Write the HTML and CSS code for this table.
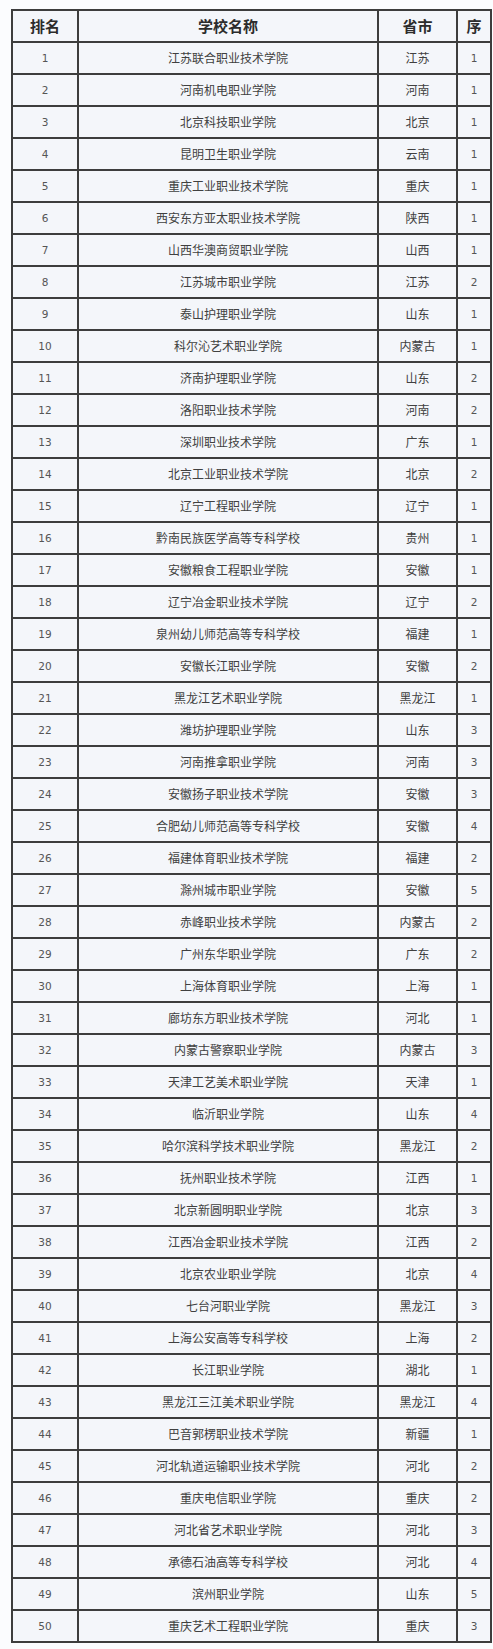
FILE: index.html
```html
<!DOCTYPE html>
<html lang="zh">
<head>
<meta charset="utf-8">
<link rel="stylesheet" href="styles.css">
</head>
<body>
<div class="rank">
  <div class="row head"><div class="cell c1">排名</div><div class="cell c2">学校名称</div><div class="cell c3">省市</div><div class="cell c4">序</div></div>
  <div class="row"><div class="cell c1 num">1</div><div class="cell c2">江苏联合职业技术学院</div><div class="cell c3">江苏</div><div class="cell c4 num">1</div></div>
  <div class="row"><div class="cell c1 num">2</div><div class="cell c2">河南机电职业学院</div><div class="cell c3">河南</div><div class="cell c4 num">1</div></div>
  <div class="row"><div class="cell c1 num">3</div><div class="cell c2">北京科技职业学院</div><div class="cell c3">北京</div><div class="cell c4 num">1</div></div>
  <div class="row"><div class="cell c1 num">4</div><div class="cell c2">昆明卫生职业学院</div><div class="cell c3">云南</div><div class="cell c4 num">1</div></div>
  <div class="row"><div class="cell c1 num">5</div><div class="cell c2">重庆工业职业技术学院</div><div class="cell c3">重庆</div><div class="cell c4 num">1</div></div>
  <div class="row"><div class="cell c1 num">6</div><div class="cell c2">西安东方亚太职业技术学院</div><div class="cell c3">陕西</div><div class="cell c4 num">1</div></div>
  <div class="row"><div class="cell c1 num">7</div><div class="cell c2">山西华澳商贸职业学院</div><div class="cell c3">山西</div><div class="cell c4 num">1</div></div>
  <div class="row"><div class="cell c1 num">8</div><div class="cell c2">江苏城市职业学院</div><div class="cell c3">江苏</div><div class="cell c4 num">2</div></div>
  <div class="row"><div class="cell c1 num">9</div><div class="cell c2">泰山护理职业学院</div><div class="cell c3">山东</div><div class="cell c4 num">1</div></div>
  <div class="row"><div class="cell c1 num">10</div><div class="cell c2">科尔沁艺术职业学院</div><div class="cell c3">内蒙古</div><div class="cell c4 num">1</div></div>
  <div class="row"><div class="cell c1 num">11</div><div class="cell c2">济南护理职业学院</div><div class="cell c3">山东</div><div class="cell c4 num">2</div></div>
  <div class="row"><div class="cell c1 num">12</div><div class="cell c2">洛阳职业技术学院</div><div class="cell c3">河南</div><div class="cell c4 num">2</div></div>
  <div class="row"><div class="cell c1 num">13</div><div class="cell c2">深圳职业技术学院</div><div class="cell c3">广东</div><div class="cell c4 num">1</div></div>
  <div class="row"><div class="cell c1 num">14</div><div class="cell c2">北京工业职业技术学院</div><div class="cell c3">北京</div><div class="cell c4 num">2</div></div>
  <div class="row"><div class="cell c1 num">15</div><div class="cell c2">辽宁工程职业学院</div><div class="cell c3">辽宁</div><div class="cell c4 num">1</div></div>
  <div class="row"><div class="cell c1 num">16</div><div class="cell c2">黔南民族医学高等专科学校</div><div class="cell c3">贵州</div><div class="cell c4 num">1</div></div>
  <div class="row"><div class="cell c1 num">17</div><div class="cell c2">安徽粮食工程职业学院</div><div class="cell c3">安徽</div><div class="cell c4 num">1</div></div>
  <div class="row"><div class="cell c1 num">18</div><div class="cell c2">辽宁冶金职业技术学院</div><div class="cell c3">辽宁</div><div class="cell c4 num">2</div></div>
  <div class="row"><div class="cell c1 num">19</div><div class="cell c2">泉州幼儿师范高等专科学校</div><div class="cell c3">福建</div><div class="cell c4 num">1</div></div>
  <div class="row"><div class="cell c1 num">20</div><div class="cell c2">安徽长江职业学院</div><div class="cell c3">安徽</div><div class="cell c4 num">2</div></div>
  <div class="row"><div class="cell c1 num">21</div><div class="cell c2">黑龙江艺术职业学院</div><div class="cell c3">黑龙江</div><div class="cell c4 num">1</div></div>
  <div class="row"><div class="cell c1 num">22</div><div class="cell c2">潍坊护理职业学院</div><div class="cell c3">山东</div><div class="cell c4 num">3</div></div>
  <div class="row"><div class="cell c1 num">23</div><div class="cell c2">河南推拿职业学院</div><div class="cell c3">河南</div><div class="cell c4 num">3</div></div>
  <div class="row"><div class="cell c1 num">24</div><div class="cell c2">安徽扬子职业技术学院</div><div class="cell c3">安徽</div><div class="cell c4 num">3</div></div>
  <div class="row"><div class="cell c1 num">25</div><div class="cell c2">合肥幼儿师范高等专科学校</div><div class="cell c3">安徽</div><div class="cell c4 num">4</div></div>
  <div class="row"><div class="cell c1 num">26</div><div class="cell c2">福建体育职业技术学院</div><div class="cell c3">福建</div><div class="cell c4 num">2</div></div>
  <div class="row"><div class="cell c1 num">27</div><div class="cell c2">滁州城市职业学院</div><div class="cell c3">安徽</div><div class="cell c4 num">5</div></div>
  <div class="row"><div class="cell c1 num">28</div><div class="cell c2">赤峰职业技术学院</div><div class="cell c3">内蒙古</div><div class="cell c4 num">2</div></div>
  <div class="row"><div class="cell c1 num">29</div><div class="cell c2">广州东华职业学院</div><div class="cell c3">广东</div><div class="cell c4 num">2</div></div>
  <div class="row"><div class="cell c1 num">30</div><div class="cell c2">上海体育职业学院</div><div class="cell c3">上海</div><div class="cell c4 num">1</div></div>
  <div class="row"><div class="cell c1 num">31</div><div class="cell c2">廊坊东方职业技术学院</div><div class="cell c3">河北</div><div class="cell c4 num">1</div></div>
  <div class="row"><div class="cell c1 num">32</div><div class="cell c2">内蒙古警察职业学院</div><div class="cell c3">内蒙古</div><div class="cell c4 num">3</div></div>
  <div class="row"><div class="cell c1 num">33</div><div class="cell c2">天津工艺美术职业学院</div><div class="cell c3">天津</div><div class="cell c4 num">1</div></div>
  <div class="row"><div class="cell c1 num">34</div><div class="cell c2">临沂职业学院</div><div class="cell c3">山东</div><div class="cell c4 num">4</div></div>
  <div class="row"><div class="cell c1 num">35</div><div class="cell c2">哈尔滨科学技术职业学院</div><div class="cell c3">黑龙江</div><div class="cell c4 num">2</div></div>
  <div class="row"><div class="cell c1 num">36</div><div class="cell c2">抚州职业技术学院</div><div class="cell c3">江西</div><div class="cell c4 num">1</div></div>
  <div class="row"><div class="cell c1 num">37</div><div class="cell c2">北京新圆明职业学院</div><div class="cell c3">北京</div><div class="cell c4 num">3</div></div>
  <div class="row"><div class="cell c1 num">38</div><div class="cell c2">江西冶金职业技术学院</div><div class="cell c3">江西</div><div class="cell c4 num">2</div></div>
  <div class="row"><div class="cell c1 num">39</div><div class="cell c2">北京农业职业学院</div><div class="cell c3">北京</div><div class="cell c4 num">4</div></div>
  <div class="row"><div class="cell c1 num">40</div><div class="cell c2">七台河职业学院</div><div class="cell c3">黑龙江</div><div class="cell c4 num">3</div></div>
  <div class="row"><div class="cell c1 num">41</div><div class="cell c2">上海公安高等专科学校</div><div class="cell c3">上海</div><div class="cell c4 num">2</div></div>
  <div class="row"><div class="cell c1 num">42</div><div class="cell c2">长江职业学院</div><div class="cell c3">湖北</div><div class="cell c4 num">1</div></div>
  <div class="row"><div class="cell c1 num">43</div><div class="cell c2">黑龙江三江美术职业学院</div><div class="cell c3">黑龙江</div><div class="cell c4 num">4</div></div>
  <div class="row"><div class="cell c1 num">44</div><div class="cell c2">巴音郭楞职业技术学院</div><div class="cell c3">新疆</div><div class="cell c4 num">1</div></div>
  <div class="row"><div class="cell c1 num">45</div><div class="cell c2">河北轨道运输职业技术学院</div><div class="cell c3">河北</div><div class="cell c4 num">2</div></div>
  <div class="row"><div class="cell c1 num">46</div><div class="cell c2">重庆电信职业学院</div><div class="cell c3">重庆</div><div class="cell c4 num">2</div></div>
  <div class="row"><div class="cell c1 num">47</div><div class="cell c2">河北省艺术职业学院</div><div class="cell c3">河北</div><div class="cell c4 num">3</div></div>
  <div class="row"><div class="cell c1 num">48</div><div class="cell c2">承德石油高等专科学校</div><div class="cell c3">河北</div><div class="cell c4 num">4</div></div>
  <div class="row"><div class="cell c1 num">49</div><div class="cell c2">滨州职业学院</div><div class="cell c3">山东</div><div class="cell c4 num">5</div></div>
  <div class="row"><div class="cell c1 num">50</div><div class="cell c2">重庆艺术工程职业学院</div><div class="cell c3">重庆</div><div class="cell c4 num">3</div></div>
</div>
</body>
</html>
```
FILE: styles.css
```css
html, body {
  margin: 0;
  padding: 0;
  background: #fbfcfe;
}
body {
  padding: 9px 0 0 11px;
  font-family: "Noto Sans CJK SC", "Liberation Sans", sans-serif;
  color: #3a3a3a;
}
.rank {
  display: flex;
  flex-direction: column;
  width: 481px;
  box-sizing: border-box;
  border-left: 2px solid #3d3d3d;
  border-top: 2px solid #3d3d3d;
  background: #f4f6fa;
}
.row {
  display: flex;
  height: 32px;
}
.cell {
  box-sizing: border-box;
  height: 32px;
  line-height: 30px;
  text-align: center;
  border-right: 2px solid #3d3d3d;
  border-bottom: 2px solid #3d3d3d;
  white-space: nowrap;
  overflow: hidden;
  font-size: 12px;
  color: #404040;
}
.head .cell {
  font-size: 15px;
  font-weight: bold;
  color: #2c2c2c;
}
.num {
  font-family: "DejaVu Sans", "Liberation Sans", sans-serif;
  font-size: 10.5px;
  color: #555;
}
.c1 { width: 66px; }
.c2 { width: 300px; }
.c3 { width: 79px; }
.c4 { width: 34px; }
```
